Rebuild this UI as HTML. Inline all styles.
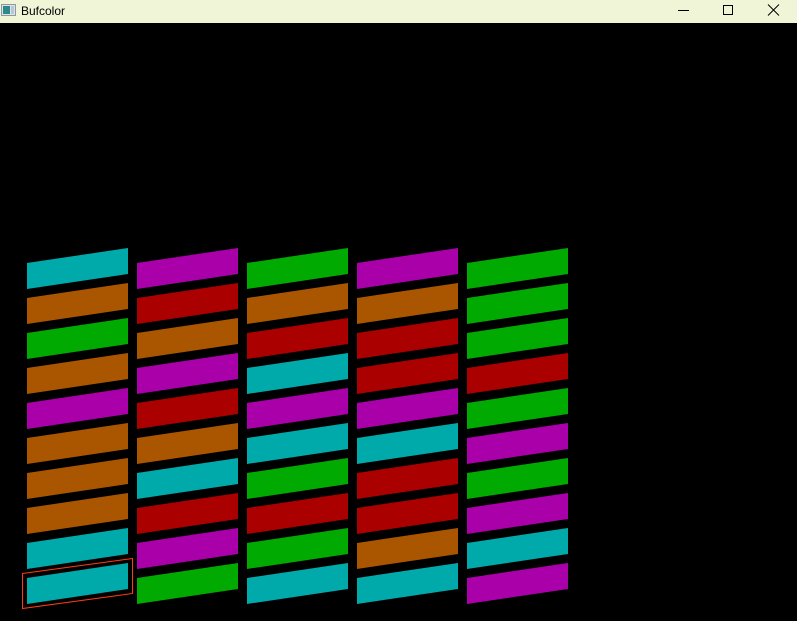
<!DOCTYPE html>
<html><head><style>
html,body{margin:0;padding:0;width:797px;height:621px;overflow:hidden;background:#000}
</style></head><body>
<svg width="797" height="621" xmlns="http://www.w3.org/2000/svg" style="display:block">
<rect x="0" y="0" width="797" height="23" fill="#f0f5d8"/>
<rect x="1.5" y="4.5" width="14" height="11" fill="#dde3e6" stroke="#8a9aa0"/>
<rect x="3" y="6" width="7" height="8" fill="#2e8a8a"/>
<rect x="11" y="6" width="3" height="8" fill="#b8c8d0"/>
<text x="21" y="15" font-family="Liberation Sans, sans-serif" font-size="12" fill="#000">Bufcolor</text>
<line x1="678" y1="10.5" x2="689" y2="10.5" stroke="#000" stroke-width="1"/>
<rect x="723.5" y="5.5" width="9" height="9" fill="none" stroke="#000" stroke-width="1"/>
<path d="M768 4.5 L779 15.5 M779 4.5 L768 15.5" stroke="#000" stroke-width="1"/>
<g id="g"></g>
<polygon points="22.5,573.5 132.5,558.5 132.5,593.5 22.5,608.5" fill="none" stroke="#ff3c10" stroke-width="1"/>
</svg>
<script>
var C={c:"#00aaaa",m:"#aa00aa",g:"#00aa00",b:"#aa5500",r:"#aa0000"};
var cols=["cbgbmbbbcc","mrbmrbcrmg","gbrcmcgrgc","mbrrmcrrbc","ggg rgmgmcm".replace(" ","")];
var s="";
for(var i=0;i<5;i++)for(var j=0;j<10;j++){
var x=27+110*i,y=263+35*j;
s+='<polygon points="'+x+','+y+' '+(x+101)+','+(y-15)+' '+(x+101)+','+(y+11)+' '+x+','+(y+26)+'" fill="'+C[cols[i][j]]+'"/>';}
document.getElementById("g").innerHTML=s;
</script>
</body></html>
